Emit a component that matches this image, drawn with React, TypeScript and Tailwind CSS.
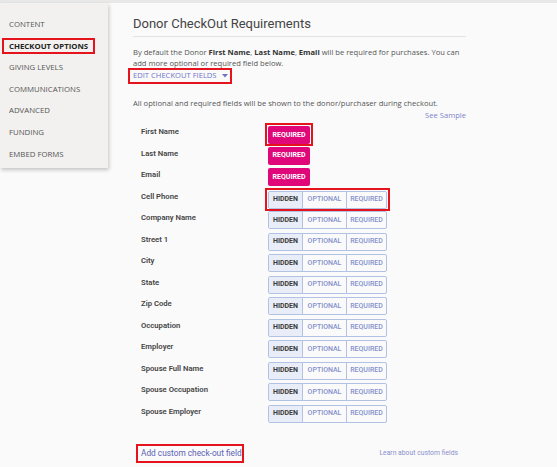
import React from "react";

const sidebar = ["CONTENT", "CHECKOUT OPTIONS", "GIVING LEVELS", "COMMUNICATIONS", "ADVANCED", "FUNDING", "EMBED FORMS"];

const req = ["First Name", "Last Name", "Email"];
const opt = ["Cell Phone", "Company Name", "Street 1", "City", "State", "Zip Code", "Occupation", "Employer", "Spouse Full Name", "Spouse Occupation", "Spouse Employer"];

function RequiredBtn() {
  return (
    <div className="h-[18px] w-[42px] rounded-[2px] bg-[#e0077b] text-white text-[7px] font-bold flex items-center justify-center whitespace-nowrap" style={{ fontFamily: "Roboto, sans-serif" }}>
      REQUIRED
    </div>
  );
}

function Group() {
  return (
    <div className="flex h-[18px] w-[119px] border border-[#b2c2e4] rounded-[2px] text-[7px] whitespace-nowrap" style={{ fontFamily: "Roboto, sans-serif" }}>
      <div className="w-[34px] bg-[#e8edf7] text-[#3a3a3a] font-bold flex items-center justify-center border-r border-[#b2c2e4]">HIDDEN</div>
      <div className="w-[44px] text-[#8490cc] font-medium flex items-center justify-center border-r border-[#b2c2e4]">OPTIONAL</div>
      <div className="flex-1 text-[#8490cc] font-medium flex items-center justify-center">REQUIRED</div>
    </div>
  );
}

export default function App() {
  return (
    <div className="w-[557px] h-[467px] bg-[#fafafa] overflow-hidden relative" style={{ fontFamily: "'Open Sans', sans-serif" }}>
      <div className="h-[3px] bg-[#e8e8e8]" />
      <div className="flex">
        <div className="w-[108px] h-[165px] bg-[#f2f1ef] shadow-[1px_2px_4px_rgba(0,0,0,0.22)] pt-[11px] shrink-0">
          {sidebar.map((s) => (
            <div key={s} className="h-[21.6px] flex items-center whitespace-nowrap">
              {s === "CHECKOUT OPTIONS" ? (
                <div className="ml-[2px] border-2 border-[#e5131b] h-[16px] w-[93px] flex items-center pl-[5px] text-[7.8px] font-bold text-[#222]">
                  {s}
                </div>
              ) : (
                <div className="pl-[9px] text-[7.8px] text-[#555]">{s}</div>
              )}
            </div>
          ))}
        </div>
        <div className="ml-[25px] w-[333px] pt-[13px]">
          <div className="text-[13px] text-[#444] leading-[16px] whitespace-nowrap" style={{ fontFamily: "Roboto, sans-serif" }}>Donor CheckOut Requirements</div>
          <div className="mt-[4px] h-px bg-[#e3e3e3]" />
          <div className="mt-[10px] text-[7.6px] leading-[11px] text-[#555] pr-[6px]">
            By default the Donor <span className="font-bold text-[#333]">First Name</span>, <span className="font-bold text-[#333]">Last Name</span>, <span className="font-bold text-[#333]">Email</span> will be required for purchases. You can add more optional or required field below.
          </div>
          <div className="-ml-[5px] -mt-[1px] border-2 border-[#e5131b] w-[104px] h-[16px] flex items-center pl-[3px] text-[7.6px] text-[#6f74c9] whitespace-nowrap">
            EDIT CHECKOUT FIELDS
            <svg width="6" height="4" viewBox="0 0 6 4" className="ml-[5px]"><path d="M0 0h6L3 3.5z" fill="#6f74c9" /></svg>
          </div>
          <div className="mt-[14px] text-[7.6px] leading-[11px] text-[#555] whitespace-nowrap">
            All optional and required fields will be shown to the donor/purchaser during checkout.
          </div>
          <div className="mt-[1px] text-right text-[7.6px] leading-[11px] text-[#7f84c9]">See Sample</div>
          <div className="mt-[4px] pl-[8px]">
            {req.map((r, i) => (
              <div key={r} className="h-[21.5px] flex whitespace-nowrap" style={{ fontFamily: "Roboto, sans-serif" }}>
                <div className="w-[127px] text-[7.7px] font-semibold text-[#444] pt-[1px]">{r}</div>
                {i === 0 ? (
                  <div className="-ml-[3px] -mt-[2px] h-[23px] border-2 border-[#e5131b] p-px">
                    <RequiredBtn />
                  </div>
                ) : (
                  <RequiredBtn />
                )}
              </div>
            ))}
            {opt.map((r, i) => (
              <div key={r} className="h-[21.5px] flex whitespace-nowrap" style={{ fontFamily: "Roboto, sans-serif" }}>
                <div className="w-[127px] text-[7.7px] font-semibold text-[#444] pt-[1px]">{r}</div>
                {i === 0 ? (
                  <div className="-ml-[3px] -mt-[2px] h-[23px] border-2 border-[#e5131b] p-px">
                    <Group />
                  </div>
                ) : (
                  <Group />
                )}
              </div>
            ))}
          </div>
          <div className="mt-[18px] flex items-center justify-between pr-[8px] whitespace-nowrap" style={{ fontFamily: "Roboto, sans-serif" }}>
            <div className="ml-[3px] border-2 border-[#e5131b] h-[19px] w-[108px] flex items-center pl-[3px] text-[8.3px] text-[#5a5fb5]">Add custom check-out field</div>
            <div className="text-[6.8px] text-[#8a8fca]">Learn about custom fields</div>
          </div>
        </div>
      </div>
    </div>
  );
}
